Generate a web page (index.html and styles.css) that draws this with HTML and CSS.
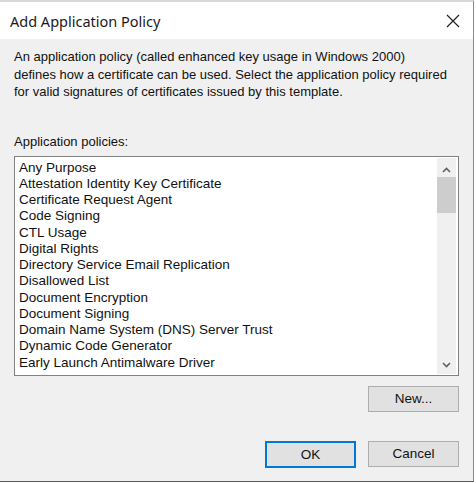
FILE: index.html
```html
<!DOCTYPE html>
<html lang="en">
<head>
    <meta charset="UTF-8">
    <title>Add Application Policy</title>
    <link rel="stylesheet" href="styles.css">
</head>
<body>
    <div class="window">
        <div class="titlebar">
            <span class="title">Add Application Policy</span>
            <svg class="close" width="14" height="14" viewBox="0 0 14 14">
                <path d="M1 1 L13 13 M13 1 L1 13" stroke="#222" stroke-width="1.2" fill="none"/>
            </svg>
        </div>
        <div class="content">
            <p class="desc">An application policy (called enhanced key usage in Windows 2000)<br>defines how a certificate can be used. Select the application policy required<br>for valid signatures of certificates issued by this template.</p>
            <p class="label">Application policies:</p>
            <div class="listbox">
                <ul class="items">
                    <li>Any Purpose</li>
                    <li>Attestation Identity Key Certificate</li>
                    <li>Certificate Request Agent</li>
                    <li>Code Signing</li>
                    <li>CTL Usage</li>
                    <li>Digital Rights</li>
                    <li>Directory Service Email Replication</li>
                    <li>Disallowed List</li>
                    <li>Document Encryption</li>
                    <li>Document Signing</li>
                    <li>Domain Name System (DNS) Server Trust</li>
                    <li>Dynamic Code Generator</li>
                    <li>Early Launch Antimalware Driver</li>
                    <li>Embedded Windows System Component Verification</li>
                </ul>
                <div class="scrollbar">
                    <svg class="arrow" width="9" height="6" viewBox="0 0 9 6">
                        <path d="M1 5 L4.5 1.5 L8 5" stroke="#606060" stroke-width="1.6" fill="none"/>
                    </svg>
                    <div class="track">
                        <div class="thumb"></div>
                    </div>
                    <svg class="arrow" width="9" height="6" viewBox="0 0 9 6">
                        <path d="M1 1 L4.5 4.5 L8 1" stroke="#606060" stroke-width="1.6" fill="none"/>
                    </svg>
                </div>
            </div>
            <div class="row-new">
                <button class="btn">New...</button>
            </div>
            <div class="row-actions">
                <button class="btn default">OK</button>
                <button class="btn">Cancel</button>
            </div>
        </div>
    </div>
</body>
</html>
```

FILE: styles.css
```css
body {
    margin: 0;
    background: #fff;
    font-family: 'Liberation Sans', Arial, sans-serif;
}
.window {
    width: 474px;
    height: 482px;
    border-right: 1px solid #8a8a8a;
    border-bottom: 1px solid #5a5a5a;
    border-top: 2px solid #d8d8d8;
    box-sizing: border-box;
    display: flex;
    flex-direction: column;
    background: #f0f0f0;
}
.titlebar {
    height: 37px;
    background: #fff;
    display: flex;
    align-items: center;
    justify-content: space-between;
    padding: 0 13px 0 10px;
    flex-shrink: 0;
}
.title {
    font-family: 'Noto Sans', sans-serif;
    font-size: 14.5px;
    color: #1a1a1a;
    margin-top: 1px;
}
.close {
    margin-top: 1px;
}
.content {
    padding: 0 14px 0 14px;
    display: flex;
    flex-direction: column;
    font-size: 13px;
    color: #111;
}
.desc {
    margin: 9px 0 0 0;
    line-height: 17.5px;
    white-space: nowrap;
}
.label {
    margin: 32px 0 0 0;
    line-height: 17px;
}
.listbox {
    margin-top: 6px;
    height: 220px;
    border: 1px solid #828282;
    background: #fff;
    display: flex;
    overflow: hidden;
    box-sizing: border-box;
    padding: 1px 2px 1px 0;
}
.items {
    list-style: none;
    margin: 0;
    padding: 2px 0 0 4px;
    flex: 1;
    overflow: hidden;
    white-space: nowrap;
}
.items li {
    height: 16.25px;
    line-height: 16.25px;
    font-size: 13.5px;
}
.scrollbar {
    width: 19px;
    background: #f0f0f0;
    display: flex;
    flex-direction: column;
    align-items: center;
    flex-shrink: 0;
}
.arrow {
    margin: 9px 0 6px;
}
.track {
    flex: 1;
    width: 100%;
}
.thumb {
    height: 36px;
    background: #cdcdcd;
    margin-top: -2px;
}
.row-new {
    display: flex;
    justify-content: flex-end;
    margin-top: 10px;
}
.row-actions {
    display: flex;
    justify-content: flex-end;
    gap: 12px;
    margin-top: 29px;
}
.btn {
    width: 91px;
    height: 26px;
    background: #e1e1e1;
    border: 1px solid #adadad;
    font-family: 'Liberation Sans', Arial, sans-serif;
    font-size: 13.5px;
    color: #111;
    padding: 0;
}
.btn.default {
    border: 2px solid #0078d7;
    height: 27px;
}
```
